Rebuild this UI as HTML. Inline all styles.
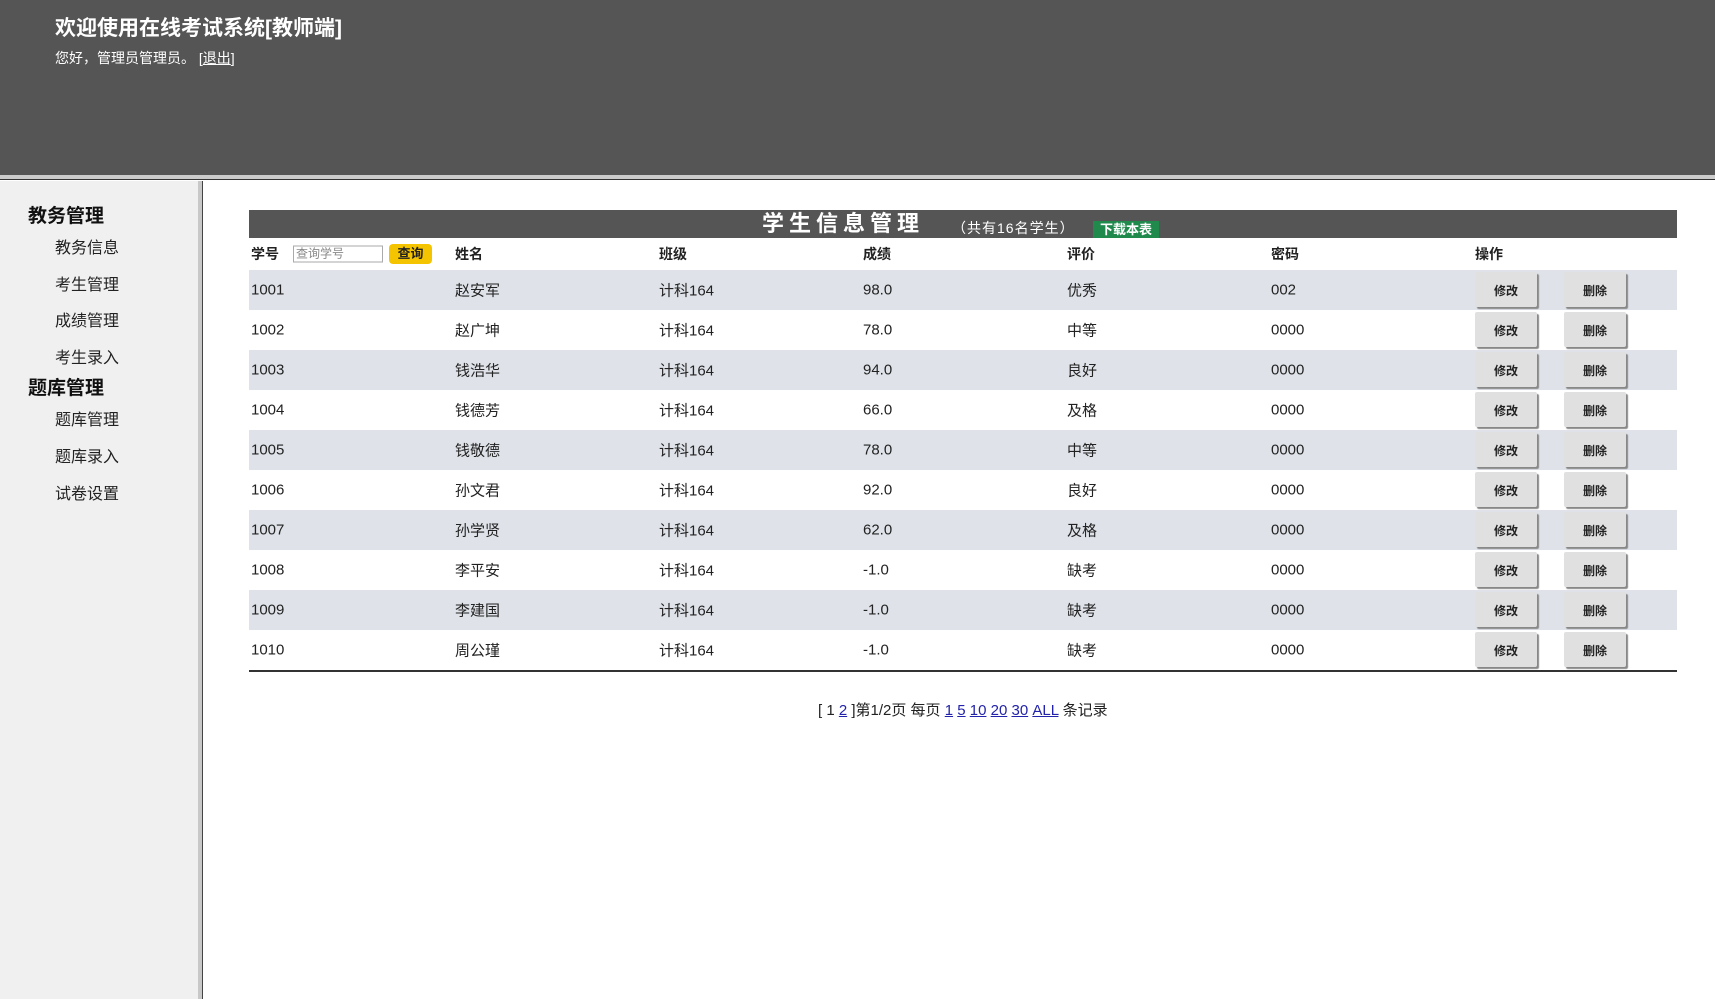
<!DOCTYPE html>
<html><head><meta charset="utf-8"><style>
*{margin:0;padding:0;box-sizing:border-box}
body{width:1715px;height:999px;overflow:hidden;background:#fff;font-family:"Liberation Sans","Noto Sans CJK SC",sans-serif;color:#222;position:relative}
#hd{position:absolute;left:0;top:0;width:1715px;height:175px;background:#555;color:#fff}
#hd h1{position:absolute;left:55px;top:12px;font-size:21px;font-weight:bold}
#hd p{position:absolute;left:55px;top:48px;font-size:14px}
#hd a{color:#fff}
#strip{position:absolute;left:0;top:175px;width:1715px;height:5px;background:#ccc;border-bottom:1px solid #333}
#sb{position:absolute;left:0;top:181px;width:198px;height:818px;background:#f0f0f0}
#sbb{position:absolute;left:198px;top:181px;width:5px;height:818px;background:#c8c8c8;border-right:1px solid #444}
.g{position:absolute;left:28px;font-size:19px;font-weight:bold;color:#111}
.it{position:absolute;left:55px;font-size:16px;color:#222}
#tb{position:absolute;left:249px;top:210px;width:1428px}
#tt{height:28px;background:#555;color:#fff;position:relative}
#tt .t{position:absolute;left:513px;top:0;font-size:22px;font-weight:bold;letter-spacing:5px;line-height:28px}
#tt .c{position:absolute;left:703px;top:8px;font-size:14px;letter-spacing:1px}
#tt .d{position:absolute;left:844px;top:11px;width:66px;height:17px;background:#1f8a4c;color:#fff;font-size:13px;font-weight:bold;text-align:center;line-height:17px}
.r{height:40px;position:relative;font-size:15px}
.r.h{height:32px;font-weight:bold;font-size:14px}
.r.o{background:#dfe3e9}
.r span{position:absolute;top:50%;transform:translateY(-50%)}
.btn{position:absolute;top:2px;width:62px;height:35px;background:#e0e0e0;box-shadow:2px 2px 1px #888;font-size:12px;font-weight:bold;text-align:center;line-height:39px;border-radius:2px}
#ln{height:2px;background:#333}
#pg{position:absolute;left:818px;top:699px;font-size:15px;color:#222}
#pg a{color:#22a;}
</style></head><body>
<div id="hd"><h1>欢迎使用在线考试系统[教师端]</h1><p>您好，管理员管理员。 [<a href="#">退出</a>]</p></div>
<div id="strip"></div>
<div id="sb">
<div class="g" style="top:20px">教务管理</div>
<div class="it" style="top:53px">教务信息</div>
<div class="it" style="top:90px">考生管理</div>
<div class="it" style="top:126px">成绩管理</div>
<div class="it" style="top:163px">考生录入</div>
<div class="g" style="top:192px">题库管理</div>
<div class="it" style="top:225px">题库管理</div>
<div class="it" style="top:262px">题库录入</div>
<div class="it" style="top:299px">试卷设置</div>
</div>
<div id="sbb"></div>
<div id="tb">
<div id="tt"><span class="t">学生信息管理</span><span class="c">（共有16名学生）</span><span class="d">下载本表</span></div>
<div class="r h"><span style="left:2px">学号</span>
<span style="left:44px;width:90px;height:17px;border:1px solid #aaa;background:#fff;font-weight:normal;font-size:12px;color:#888;line-height:15px;padding-left:2px">查询学号</span>
<span style="left:140px;width:43px;height:20px;background:#f5c400;border-radius:4px;font-size:13px;text-align:center;line-height:20px">查询</span>
<span style="left:206px">姓名</span><span style="left:410px">班级</span><span style="left:614px">成绩</span><span style="left:818px">评价</span><span style="left:1022px">密码</span><span style="left:1226px">操作</span></div>
<div id="rows"></div>
<div id="ln"></div>
</div>
<div id="pg">[ 1 <a href="#">2</a> ]第1/2页 每页 <a href="#">1</a> <a href="#">5</a> <a href="#">10</a> <a href="#">20</a> <a href="#">30</a> <a href="#">ALL</a> 条记录</div>
<script>
var d=[["1001","赵安军","98.0","优秀","002"],["1002","赵广坤","78.0","中等","0000"],["1003","钱浩华","94.0","良好","0000"],["1004","钱德芳","66.0","及格","0000"],["1005","钱敬德","78.0","中等","0000"],["1006","孙文君","92.0","良好","0000"],["1007","孙学贤","62.0","及格","0000"],["1008","李平安","-1.0","缺考","0000"],["1009","李建国","-1.0","缺考","0000"],["1010","周公瑾","-1.0","缺考","0000"]];
var h="";d.forEach(function(r,i){h+='<div class="r'+(i%2==0?' o':'')+'"><span style="left:2px">'+r[0]+'</span><span style="left:206px">'+r[1]+'</span><span style="left:410px">计科164</span><span style="left:614px">'+r[2]+'</span><span style="left:818px">'+r[3]+'</span><span style="left:1022px">'+r[4]+'</span><div class="btn" style="left:1226px">修改</div><div class="btn" style="left:1315px">删除</div></div>'});
document.getElementById("rows").innerHTML=h;
</script>
</body></html>
